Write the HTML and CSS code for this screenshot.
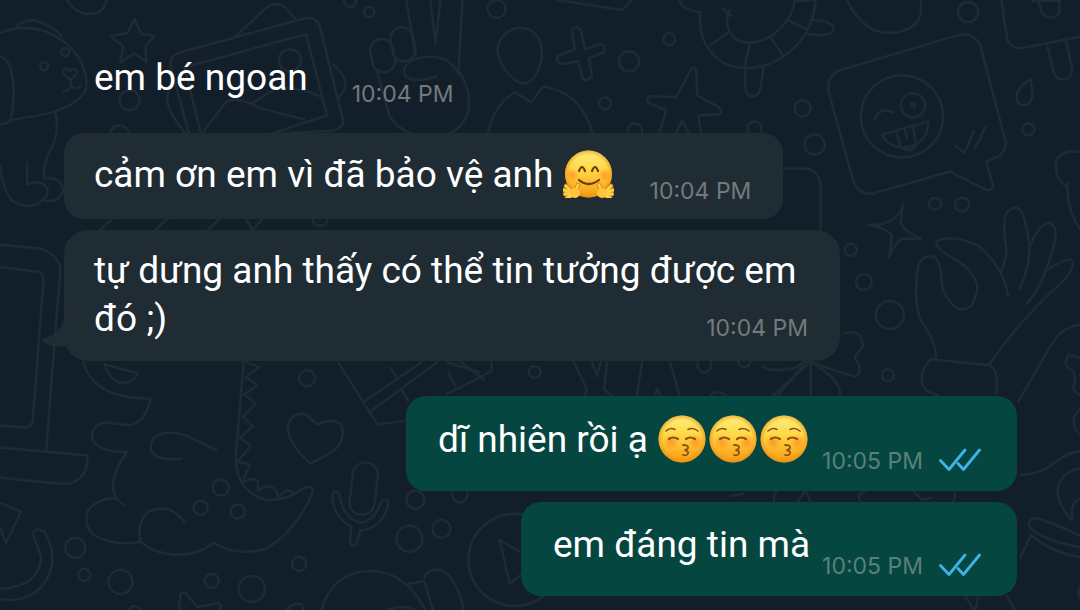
FILE: index.html
```
<!DOCTYPE html>
<html lang="vi">
<head>
    <meta charset="UTF-8">
    <meta name="viewport" content="width=device-width, initial-scale=1.0">
    <title>Chat</title>
    <link rel="stylesheet" href="styles.css">
</head>
<body>
    <svg class="symbols" aria-hidden="true">
        <defs>
            <linearGradient id="skin" x1="0" y1="0" x2="0" y2="1">
                <stop offset="0" stop-color="#fff07c"/>
                <stop offset="0.45" stop-color="#ffd443"/>
                <stop offset="1" stop-color="#f89a12"/>
            </linearGradient>
            <radialGradient id="edge">
                <stop offset="0.8" stop-color="#e98a10" stop-opacity="0"/>
                <stop offset="1" stop-color="#e98a10" stop-opacity="0.6"/>
            </radialGradient>
            <radialGradient id="blush">
                <stop offset="0" stop-color="#ff7a1c" stop-opacity="0.6"/>
                <stop offset="1" stop-color="#ff7a1c" stop-opacity="0"/>
            </radialGradient>
        </defs>
        <symbol id="kiss" viewBox="0 0 51 48">
            <circle cx="25" cy="24" r="23.5" fill="url(#skin)"/>
            <circle cx="25" cy="24" r="23.5" fill="url(#edge)"/>
            <circle cx="14" cy="27" r="8" fill="url(#blush)"/>
            <circle cx="39" cy="27" r="8" fill="url(#blush)"/>
            <g fill="none" stroke="#8a5210" stroke-linecap="round">
                <path stroke-width="1.6" d="M9 16 Q13 12 18 14.5 M31 14.5 Q36 12 41 16"/>
                <path stroke-width="2.2" d="M12 24 Q16 21 21 24 M29 24 Q33 21 38 24"/>
                <path stroke-width="1.8" d="M26 30 Q32 30 31 33 Q30 35 27.5 35 Q32 36 31 38.5 Q30 41 26 40"/>
            </g>
        </symbol>
        <symbol id="hug" viewBox="0 0 51 48">
            <circle cx="25.5" cy="24" r="23.5" fill="url(#skin)"/>
            <circle cx="25.5" cy="24" r="23.5" fill="url(#edge)"/>
            <circle cx="9" cy="25" r="7" fill="url(#blush)"/>
            <circle cx="42" cy="25" r="7" fill="url(#blush)"/>
            <g fill="none" stroke="#6b3d0c" stroke-width="2.2" stroke-linecap="round">
                <path d="M16 21 Q19 13 22 21 M29 21 Q32 13 35 21"/>
                <path d="M16 30 Q25.5 38 36 30"/>
            </g>
            <g stroke="#d98412" stroke-width="4.5" stroke-linecap="round">
                <path d="M10 43 L3 36 M10 43 L1 40 M10 44 L2 44 M11 44 L4 48 M12 42 L15 35"/>
                <path d="M41 43 L48 36 M41 43 L50 40 M41 44 L49 44 M40 44 L47 48 M39 42 L36 35"/>
            </g>
            <g stroke="#ffd04a" stroke-width="2.8" stroke-linecap="round">
                <path d="M10 43 L3 36 M10 43 L1 40 M10 44 L2 44 M11 44 L4 48 M12 42 L15 35"/>
                <path d="M41 43 L48 36 M41 43 L50 40 M41 44 L49 44 M40 44 L47 48 M39 42 L36 35"/>
            </g>
            <circle cx="12" cy="43" r="5" fill="#ffc63c"/>
            <circle cx="39" cy="43" r="5" fill="#ffc63c"/>
        </symbol>
        <symbol id="ticks" viewBox="0 0 42 24">
            <path d="M1.5 12.5 L10 21.5 L26 2 M19 15.5 L24.5 21.5 L40.5 2" fill="none" stroke="#3fb2e6" stroke-width="2.8" stroke-linecap="round" stroke-linejoin="round"/>
        </symbol>
    </svg>

    <!-- doodle wallpaper -->
    <svg class="wallpaper" viewBox="0 0 1080 610" preserveAspectRatio="xMinYMin slice" aria-hidden="true">
        <!-- dog -->
        <path d="M0 33 Q20 24 45 31 Q70 42 80 60 Q90 82 84 93 Q74 106 48 113 Q28 117 13 119 Q6 124 0 124 M0 56 Q10 60 12 75 Q16 100 10 120 M17 26 Q30 15 46 25 Q58 30 61 36"/>
        <path d="M55 112 Q60 130 51 148 Q42 165 44 178 Q62 176 63 190 Q60 202 45 200 M0 165 Q3 190 12 200 Q25 208 36 204 Q50 196 47 188 Q42 178 27 184 L27 162"/>
        <circle cx="44" cy="66" r="4"/><circle cx="65" cy="52" r="4"/>
        <path d="M70 79 Q61 74 63 70 Q67 67 70 71 Q74 67 77 71 Q77 76 70 79 L71 86 Q68 91 63 91 M71 86 Q76 90 80 86"/>
        <path d="M134 19 l7 15 l13 2 l-9 10 l1 16 l-12 -9 l-14 9 l3 -16 l-13 -10 l17 -3Z"/>
        <!-- photos -->
        <path d="M188 132 L170 66 Q168 56 180 52 L305 18 Q316 17 319 27 L342 120 Q342 128 332 130 L265 134 M236 35 L265 8 Q275 0 285 8 L294 18 M200 132 L184 67 L305 34 L326 115 L268 134 M202 132 L225 102 Q235 95 260 108 L303 119 M250 104 L275 88 Q295 85 322 97 M168 92 Q162 105 184 132 M332 64 Q348 78 343 90 L338 97"/>
        <circle cx="289" cy="60" r="11"/><circle cx="129" cy="100" r="10"/><circle cx="119" cy="135" r="10"/>
        <path d="M67 0 Q75 14 90 14 Q103 14 106 0 M100 229 l12 -11 M155 229 l12 -11 M207 229 l12 -11 M245 218 L252 229 L262 218"/>
        <circle cx="349" cy="1" r="6"/><circle cx="368" cy="12" r="5"/><circle cx="495" cy="9" r="9"/><circle cx="319" cy="217" r="8"/>
        <!-- victory hand -->
        <path d="M405 0 L414 55 M429 0 L434 43 L439 0 M461 0 L457 70 Q470 90 467 110 Q460 135 430 138 Q400 135 388 115 L376 72 M411 60 Q430 53 445 60 Q455 68 458 75 M411 60 Q398 68 405 77 Q415 83 435 76"/>
        <rect x="370" y="39" width="23" height="33" rx="11" transform="rotate(-12 381 56)"/>
        <rect x="390" y="27" width="23" height="34" rx="11" transform="rotate(-10 402 43)"/>
        <!-- person -->
        <path d="M519 28 C505 28 495 40 496 52 C498 66 512 83 522 83 C532 83 541 66 540 50 C539 36 530 28 519 28Z M486 134 Q492 105 513 92 L530 102 L541 86 Q580 92 591 134"/>
        <path d="M570 30 q4 -6 9 0 l4 19 l16 -5 q6 2 3 8 l-15 6 l3 18 q-4 6 -9 3 l-5 -18 l-15 3 q-8 -2 -5 -8 l17 -7Z"/>
        <circle cx="627" cy="61" r="10"/><circle cx="667" cy="39" r="6"/><circle cx="603" cy="103" r="6"/><circle cx="633" cy="130" r="7"/>
        <path d="M657 134 L664 110 L646 102 Q642 95 652 96 L674 97 L688 70 Q694 64 694 73 L695 95 L717 107 Q722 115 712 114 L696 115 L699 134 M673 134 L680 120 L687 134 M556 0 L620 10 L630 0 M677 0 Q680 10 698 12"/>
        <!-- turtle -->
        <path d="M698 12 Q695 45 720 62 Q745 75 775 60 Q810 40 813 0 M727 10 Q720 30 735 40 Q750 47 770 35 Q790 20 792 0 M720 8 l9 8 M708 45 L725 33 M747 44 L742 68 M768 37 L781 56 M787 21 L804 29 M793 1 L813 0 M743 68 V88 Q744 96 750 96 Q757 95 758 88 L761 68 M808 20 Q830 20 831 29 Q830 37 803 34"/>
        <path d="M844 0 Q860 32 885 33 Q915 32 918 12 V0 M998 0 L1004 40 Q1008 48 1018 48 L1080 36 M1044 46 L1050 72 Q1055 82 1065 78 Q1070 73 1068 66 L1063 42 M1029 1 H1057 M1035 2 L1039 14 Q1050 22 1056 12 V0 M1027 79 Q1033 103 1021 105 Q1011 104 1014 92 Q1017 85 1027 79Z"/>
        <circle cx="965" cy="12" r="10"/><circle cx="1025" cy="129" r="6"/><circle cx="800" cy="108" r="8"/><circle cx="812" cy="144" r="10"/><circle cx="752" cy="128" r="7"/>
        <!-- winking face in a speech bubble -->
        <path d="M837 70 L955 35 Q970 32 977 45 L1002 140 Q1004 152 992 157 L983 161 L990 186 Q988 191 982 189 L947 171 L870 193 Q856 194 851 182 L826 92 Q823 77 837 70Z M872 118 Q878 106 890 112 M879 134 L925 121 Q925 145 900 147 Q884 146 879 134Z M893 131 L898 147 Q910 154 913 143 L910 126 M902 130 l2 8 M952 145 L961 152 L971 130 M972 148 L982 127"/>
        <circle cx="899" cy="116" r="41"/><circle cx="910" cy="105" r="12"/><circle cx="910" cy="105" r="2"/>
        <path d="M781 168 H803 Q818 170 818 188 V229 M1062 185 Q1050 178 1053 160 Q1058 148 1080 152 M1064 182 Q1062 210 1080 233"/>
        <path d="M900 203 Q895 225 866 224 Q885 228 889 235 Q888 245 886 257 Q893 240 900 238 L918 238 Q900 230 898 222Z"/>
        <circle cx="932" cy="203" r="6"/><circle cx="959" cy="204" r="7"/><circle cx="848" cy="249" r="6"/><circle cx="861" cy="281" r="8"/><circle cx="887" cy="314" r="14"/><circle cx="885" cy="374" r="6"/>
        <!-- ok hand -->
        <path d="M933 356 Q933 340 918 320 Q910 300 915 265 Q920 253 931 256 Q938 260 939 285 Q940 293 950 304 Q958 312 968 305 Q975 292 974 284 Q970 270 955 260 Q930 248 934 240 Q950 233 975 245 Q1000 265 1005 295 M998 270 Q1004 255 1003 248 Q998 215 1005 210 Q1015 202 1020 215 Q1026 235 1026 250 Q1025 270 1016 288 M1026 246 Q1036 223 1046 222 Q1055 226 1051 242 Q1040 285 1024 302 M1042 270 Q1060 258 1068 259 Q1073 265 1060 280 Q1015 320 986 363 M928 358 L986 364 Q996 368 993 392 M928 358 Q915 370 920 385 Q925 392 935 394"/>
        <path d="M1015 400 L1050 340 Q1060 325 1080 323 M1080 357 L1065 354 Q1058 365 1070 370 L1072 380 Q1065 390 1080 395 M1080 405 Q1068 412 1071 425 Q1074 433 1080 435 M1017 473 Q1035 474 1050 462 Q1065 450 1080 449 M1080 467 Q1058 468 1054 488 Q1055 505 1068 518 M1080 496 Q1066 498 1069 516"/>
        <path d="M842 332 Q860 328 860 345 L852 356 Q862 372 852 375 Q830 370 808 360 Q800 360 795 366 Q770 372 760 365 M808 362 V395 M806 362 L770 395 M810 362 Q840 380 837 395 M800 365 L775 395"/>
        <path d="M1080 546 Q1040 540 1026 525 Q1024 515 1035 517 Q1060 525 1080 536 M1080 556 Q1045 550 1028 533 L1017 556 M1080 580 Q1070 590 1080 602 M962 594 L972 610 L975 594 M1004 594 L1012 610"/>
        <!-- monitor and wave -->
        <path d="M0 244 L42 248 Q60 255 60 270 L46 448 M0 266 L40 271 Q44 275 43 285 L33 415 Q33 426 25 426 L0 424 M0 446 L87 454 Q88 478 68 482 Q60 483 0 476"/>
        <path d="M83 360 Q90 390 130 396 L150 398 Q145 420 130 424 Q115 422 105 421 Q90 424 92 438 Q100 452 127 450 Q105 480 117 498 L124 504 M104 363 L137 372 Q132 384 118 381 Q108 377 104 363Z M117 497 Q100 495 88 508 Q82 525 95 534 Q115 545 140 540 Q136 520 148 510 Q170 500 184 521 M140 540 Q155 553 180 553 Q200 552 213 541 Q235 555 265 547 Q295 530 312 490 Q312 482 300 488 Q285 500 265 498 Q235 490 235 455 L243 360 M216 449 L185 434 Q165 428 153 436 Q145 452 160 456 Q170 459 181 457"/>
        <path d="M246 361 L258 366 L245 376 L257 384 L243 393 L255 402 L242 415 L252 425 L239 436 L250 444 L237 460 L249 463 L241 482 Q252 474 257 480 L257 490 Q268 480 276 490 L277 497 Q285 484 293 492"/>
        <circle cx="306" cy="377" r="8"/><circle cx="220" cy="486" r="8"/><circle cx="200" cy="506" r="7"/><circle cx="237" cy="510" r="7"/><circle cx="75" cy="546" r="10"/><circle cx="84" cy="573" r="6"/><circle cx="120" cy="580" r="12"/><circle cx="211" cy="579" r="7"/><circle cx="251" cy="587" r="13"/><circle cx="298" cy="562" r="7"/><circle cx="134" cy="610" r="6"/>
        <path d="M309 462 Q285 440 287 423 Q292 410 305 413 L316 423 Q330 416 340 423 Q345 435 335 447 Q325 455 309 462Z M178 610 L180 592 L184 590 L197 605 L218 601 L221 605 L217 610 M0 501 L21 510 L6 541 L0 526 M0 587 Q40 585 41 555 L33 533 Q35 524 44 530 Q60 555 45 580 Q30 602 0 597"/>
        <!-- microphone -->
        <rect x="350" y="461" width="25" height="52" rx="12" transform="rotate(7 362 487)"/>
        <path d="M331 495 Q332 487 338 492 Q342 518 360 521 Q374 518 380 500 Q386 494 387 502 Q384 520 368 527 L359 529 L356 541 Q351 548 349 540 L350 525 Q332 515 331 495Z"/>
        <circle cx="414" cy="498" r="9"/><circle cx="408" cy="537" r="13"/><circle cx="440" cy="527" r="9"/><circle cx="533" cy="371" r="6"/><circle cx="513" cy="558" r="46"/>
        <path d="M498 538 L535 560 L508 582Z M450 490 q2 12 9 11 q8 -2 7 -12 M320 610 Q330 570 370 569 Q405 570 425 610 M423 575 Q428 566 440 568 Q455 575 463 610 M407 582 L423 579 L432 610 M285 610 Q290 600 300 602 L304 610 M383 610 q17 -10 35 0"/>
        <path d="M337 361 L376 423 L408 419 M362 401 L420 361 M368 411 L436 361 M445 393 L490 370 V361 M390 367 L396 378 M400 388 L407 400 M447 371 L454 385 M446 361 L478 371 M460 361 L482 378"/>
        <path d="M572 361 L585 388 L578 411 M590 361 L595 375 L599 361 M605 361 L602 388 L622 405 M640 361 L632 411 M648 411 L655 387 L665 411 M668 361 L682 411 M705 411 Q705 390 716 391 Q728 392 728 411"/>
        <circle cx="702" cy="364" r="7"/><circle cx="742" cy="360" r="6"/>
        <path d="M727 495 l14 -3 M772 500 q-2 -8 3 -11 M795 500 l8 -11 l5 11 M858 500 q-6 -8 6 -11 M911 490 l8 8 l10 -2 M950 500 q3 -6 1 -11"/>
    </svg>

    <main class="chat">
        <div class="msg in plain">
            <span class="text">em bé ngoan</span>
            <time class="time">10:04 PM</time>
        </div>
        <div class="msg in">
            <span class="text">cảm ơn em vì đã bảo vệ anh <svg class="emoji" role="img" aria-label="🤗"><use href="#hug"/></svg></span>
            <time class="time">10:04 PM</time>
        </div>
        <div class="msg in long">
            <span class="text">tự dưng anh thấy có thể tin tưởng được em đó ;)</span>
            <time class="time">10:04 PM</time>
        </div>
        <div class="msg out first">
            <span class="text">dĩ nhiên rồi ạ <svg class="emoji" role="img" aria-label="😚"><use href="#kiss"/></svg><svg class="emoji" role="img" aria-label="😚"><use href="#kiss"/></svg><svg class="emoji" role="img" aria-label="😚"><use href="#kiss"/></svg></span>
            <time class="time">10:05 PM</time>
            <svg class="ticks" role="img" aria-label="Đã xem"><use href="#ticks"/></svg>
        </div>
        <div class="msg out">
            <span class="text">em đáng tin mà</span>
            <time class="time">10:05 PM</time>
            <svg class="ticks" role="img" aria-label="Đã xem"><use href="#ticks"/></svg>
        </div>
    </main>
</body>
</html>
```
FILE: styles.css
```
body {
    margin: 0;
    min-height: 100vh;
    position: relative;
    overflow-x: hidden;
    background-color: #121f2a;
    color: #fff;
    font-family: Roboto, "Noto Sans", sans-serif;
    font-size: 37px;
    line-height: 48px;
}
.symbols {
    position: absolute;
    width: 0;
    height: 0;
}
.wallpaper {
    position: absolute;
    top: 0;
    left: 0;
    width: 100%;
    height: 100%;
    fill: none;
    stroke: #1e2b35;
    stroke-width: 2.5;
    stroke-linecap: round;
    stroke-linejoin: round;
}
.chat {
    position: relative;
    display: flex;
    flex-direction: column;
    align-items: flex-start;
    gap: 11px;
    padding: 37px 63px 16px 64px;
}
.msg {
    display: flex;
    align-items: flex-end;
    border-radius: 20px;
}
.in {
    background-color: #202c33;
    padding: 17px 32px 14px 30px;
    gap: 36px;
}
.in .text {
    margin-bottom: 6px;
}
.plain {
    background-color: transparent;
    gap: 44px;
}
.long {
    display: block;
    position: relative;
    max-width: 714px;
    padding-bottom: 18px;
    border-radius: 24px;
}
.long .time {
    float: right;
    margin-top: 19px;
}
/* tail */
.long::before {
    content: "";
    position: absolute;
    left: -22px;
    bottom: 14px;
    width: 26px;
    height: 32px;
    background-color: #202c33;
    clip-path: path("M26 0 L22 2 Q20 18 3 23 Q-2 25 2 28 Q10 33 26 31 Z");
}
.out {
    align-self: flex-end;
    background-color: #054640;
    padding: 19px 36px 16px 32px;
    gap: 12px;
}
.out .text {
    margin-bottom: 11px;
}
.first {
    margin-top: 24px;
}
.time {
    font-family: Inter, sans-serif;
    font-size: 23px;
    line-height: 28px;
    white-space: nowrap;
    color: #74797c;
}
.out .time {
    color: #5b8079;
}
.emoji {
    width: 51px;
    height: 48px;
    vertical-align: -11px;
    overflow: visible;
}
.ticks {
    width: 42px;
    height: 24px;
    margin: 0 0 3px 4px;
}
```
